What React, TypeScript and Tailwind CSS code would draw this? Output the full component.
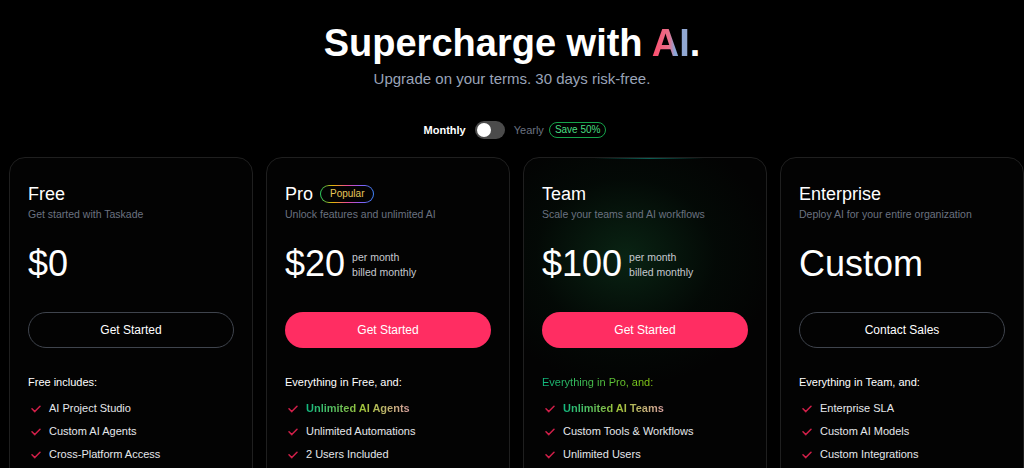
import React from "react";

const font = { fontFamily: '"Liberation Sans", Arial, sans-serif' };

function Check() {
  return (
    <svg width="10" height="8" viewBox="0 0 10 8" className="shrink-0">
      <path d="M1 3.8 L3.8 6.6 L9 1.2" fill="none" stroke="#d01f49" strokeWidth="1.5" strokeLinecap="round" strokeLinejoin="round" />
    </svg>
  );
}

type Feature = { text: string; grad?: boolean };

function Card({
  name,
  desc,
  price,
  perMonth,
  button,
  primary,
  header,
  headerGrad,
  features,
  popular,
  glow,
}: {
  name: string;
  desc: string;
  price: string;
  perMonth?: boolean;
  button: string;
  primary?: boolean;
  header: string;
  headerGrad?: boolean;
  features: Feature[];
  popular?: boolean;
  glow?: boolean;
}) {
  return (
    <div className="relative h-[330px] rounded-[16px] border border-[#1f1f1f] bg-[#030303] px-[18px] pt-[24px] overflow-hidden">
      {glow && (
        <>
          <div className="pointer-events-none absolute inset-0 bg-[radial-gradient(ellipse_150px_130px_at_42%_30%,rgba(22,101,52,0.33),rgba(5,46,22,0.14)_60%,transparent_100%)]" />
          <div className="pointer-events-none absolute left-[70px] top-0 h-px w-[110px] bg-[linear-gradient(90deg,transparent,#14b8a6,transparent)] opacity-50" />
        </>
      )}
      <div className="relative">
        <div className="flex items-center gap-[7px] h-[24px]">
          <span className="text-[18px] leading-[24px] text-white">{name}</span>
          {popular && (
            <span className="rounded-full p-px bg-[linear-gradient(90deg,#22c55e,#eab308,#ec4899,#8b5cf6,#3b82f6)]">
              <span className="block rounded-full bg-[#030303] px-[9px] text-[10px] leading-[16px] text-[#e6c75a]">Popular</span>
            </span>
          )}
        </div>
        <div className="text-[10.5px] leading-[16px] text-[#6b7280]">{desc}</div>
        <div className="mt-[22px] flex items-center gap-[7px] h-[40px]">
          <span className="text-[36px] leading-[40px] text-white">{price}</span>
          {perMonth && (
            <div className="text-[10.5px] leading-[15px] text-[#c6c9d0] pt-[1px]">
              <div>per month</div>
              <div>billed monthly</div>
            </div>
          )}
        </div>
        <button
          className={
            "mt-[28px] h-[36px] w-full rounded-full text-[12px] " +
            (primary ? "bg-[#ff2d62] text-white" : "border border-[#3f444d] text-white")
          }
        >
          {button}
        </button>
        <div
          className={
            "mt-[26px] text-[11px] leading-[16px] " +
            (headerGrad ? "bg-[linear-gradient(90deg,#10b981,#84cc16,#eab308)] bg-clip-text text-transparent" : "text-white")
          }
        >
          {header}
        </div>
        <div className="mt-[7px]">
          {features.map((f) => (
            <div key={f.text} className="flex items-center gap-[8px] h-[23px] pl-[3px]">
              <Check />
              <span
                className={
                  "text-[11px] " +
                  (f.grad
                    ? "font-semibold bg-[linear-gradient(90deg,#10b981,#a3c43a_55%,#d9a0a0)] bg-clip-text text-transparent"
                    : "text-[#e5e7eb]")
                }
              >
                {f.text}
              </span>
            </div>
          ))}
        </div>
      </div>
    </div>
  );
}

export default function App() {
  return (
    <div style={font} className="h-[468px] w-[1024px] overflow-hidden bg-black">
      <div className="flex flex-col items-center pt-[19px]">
        <h1 className="text-[38px] leading-[48px] font-bold text-white">
          Supercharge with{" "}
          <span className="bg-[linear-gradient(90deg,#ff4d6d,#e8708a_45%,#8aa6d8_60%,#94a8cf)] bg-clip-text text-transparent">AI</span>.
        </h1>
        <p className="mt-[2px] text-[15px] leading-[20px] text-[#9aa4b8]">Upgrade on your terms. 30 days risk-free.</p>
        <div className="mt-[32px] flex items-center h-[18px] pl-[6px]">
          <span className="text-[11px] font-semibold text-white">Monthly</span>
          <div className="ml-[9px] h-[18px] w-[30px] rounded-full bg-[#4b4b4b] p-[2px]">
            <div className="h-[14px] w-[14px] rounded-full bg-white" />
          </div>
          <span className="ml-[9px] text-[11px] text-[#6b7280]">Yearly</span>
          <span className="ml-[5px] rounded-full border border-[#16a34a] px-[5px] text-[10px] leading-[14px] text-[#4ade80]">Save 50%</span>
        </div>
      </div>
      <div className="mt-[18px] grid grid-cols-4 gap-[13px] pl-[9px]">
        <Card
          name="Free"
          desc="Get started with Taskade"
          price="$0"
          button="Get Started"
          header="Free includes:"
          features={[{ text: "AI Project Studio" }, { text: "Custom AI Agents" }, { text: "Cross-Platform Access" }]}
        />
        <Card
          name="Pro"
          popular
          desc="Unlock features and unlimited AI"
          price="$20"
          perMonth
          button="Get Started"
          primary
          header="Everything in Free, and:"
          features={[{ text: "Unlimited AI Agents", grad: true }, { text: "Unlimited Automations" }, { text: "2 Users Included" }]}
        />
        <Card
          name="Team"
          glow
          desc="Scale your teams and AI workflows"
          price="$100"
          perMonth
          button="Get Started"
          primary
          header="Everything in Pro, and:"
          headerGrad
          features={[{ text: "Unlimited AI Teams", grad: true }, { text: "Custom Tools & Workflows" }, { text: "Unlimited Users" }]}
        />
        <Card
          name="Enterprise"
          desc="Deploy AI for your entire organization"
          price="Custom"
          button="Contact Sales"
          header="Everything in Team, and:"
          features={[{ text: "Enterprise SLA" }, { text: "Custom AI Models" }, { text: "Custom Integrations" }]}
        />
      </div>
    </div>
  );
}
